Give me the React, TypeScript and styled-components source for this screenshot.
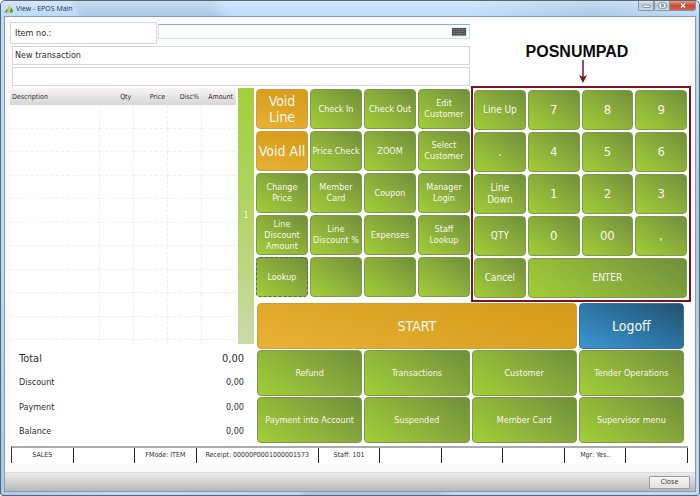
import React from "react";
import styled, { createGlobalStyle, css } from "styled-components";

const GlobalStyle = createGlobalStyle`
  *, *::before, *::after { box-sizing: border-box; }
  html, body { margin: 0; padding: 0; background: #ffffff; }
  body, button, input, table {
    font-family: "DejaVu Sans Condensed", "DejaVu Sans", "Noto Sans", sans-serif;
    color: #2e2e2e;
  }
  body { font-size: 9px; }
`;

const skins = {
  green: css`
    background: linear-gradient(35deg, #a3d037 0%, #89ab3b 55%, #6e8e3b 100%);
    border-color: #7c9a48;
  `,
  orange: css`
    background: linear-gradient(15deg, #e8b236 0%, #dda526 50%, #d49a18 100%);
    border-color: #c99d45;
  `,
  blue: css`
    background: linear-gradient(25deg, #3c98d4 0%, #2d74a3 50%, #23506f 100%);
    border-color: #3d6f90;
  `,
};
type Skin = keyof typeof skins;

const textSizes = {
  small: css`font-size: 9px; line-height: 11px;`,
  medium: css`font-size: 10px; line-height: 12px;`,
  digit: css`font-size: 13px; line-height: 16px;`,
  large: css`font-size: 14px; line-height: 16px;`,
};
type TextSize = keyof typeof textSizes;

const WindowFrame = styled.div`
  min-height: 100vh;
  display: flex;
  flex-direction: column;
  padding: 0 3px 3px;
  border: 1px solid #5c646e;
  border-radius: 5px 5px 3px 3px;
  background:
    linear-gradient(180deg, rgba(255, 255, 255, 0.35) 0, rgba(255, 255, 255, 0) 16px),
    linear-gradient(65deg, #a9c9ec 0%, #bbdcfd 12%, #b9dafb 32%, #a8c8e8 33%, #a8c8e8 47%, #badbfc 49%, #badbfc 75%, #a9c8e8 88%, #bcdcfc 100%);
`;

const TitleBar = styled.header`
  height: 15px;
  display: flex;
  align-items: center;
  gap: 3px;
`;

const Title = styled.h1`
  flex: 1;
  margin: 0;
  font: 7px/10px "Open Sans", "Noto Sans", sans-serif;
  color: #1d2b3a;
`;

const CaptionButtons = styled.div`
  display: flex;
  align-self: flex-start;
`;

const CaptionButton = styled.button<{ $close?: boolean }>`
  width: ${(p) => (p.$close ? 26 : 16)}px;
  height: 10px;
  padding: 0;
  display: flex;
  align-items: center;
  justify-content: center;
  border: 1px solid #8793a3;
  border-top: 0;
  border-left-width: ${(p) => (p.$close ? 0 : 1)}px;
  border-radius: 0 0 ${(p) => (p.$close ? "3px 0" : "0 2px")};
  background: ${(p) =>
    p.$close
      ? "linear-gradient(#e3a090, #cd4a30 50%, #d4634a)"
      : "linear-gradient(#dfe7f1, #b7c4d4 50%, #cddbea)"};
`;

const Client = styled.main`
  flex: 1;
  display: flex;
  flex-direction: column;
  border: 1px solid #8c9bab;
  background: #fafafa;
`;

const Panel = styled.div`
  flex: 1;
  margin: 5px 5px 8px;
  background: #ffffff;
`;

const Workspace = styled.div`
  display: grid;
  grid-template-columns: minmax(0, 246fr) minmax(0, 215fr) minmax(0, 220fr);
  grid-template-rows: 64px auto auto;
  margin-right: -1px;
`;

const EntryArea = styled.div`
  grid-column: 1 / 3;
  display: flex;
  flex-direction: column;
  gap: 2px;
  padding-right: 1px;
`;

const EntryRow = styled.form`
  display: flex;
  align-items: flex-start;
  gap: 1px;
  margin: 0;
`;

const EntryLabel = styled.label`
  width: 32%;
  height: 22px;
  padding-left: 4px;
  border: 1px solid #d9d9d9;
  font-size: 9px;
  line-height: 20px;
`;

const EntryField = styled.div`
  flex: 1;
  height: 15px;
  margin-top: 2px;
  display: flex;
  align-items: center;
  padding-right: 2px;
  border: 1px solid #c5dff3;
  border-top-color: #86b1d8;
`;

const EntryInput = styled.input`
  flex: 1;
  min-width: 0;
  height: 12px;
  padding: 0 4px;
  border: 0;
  outline: 0;
  background: transparent;
  font-size: 9px;
`;

const KeyboardButton = styled.button`
  width: 16px;
  height: 10px;
  padding: 0;
  border: 0;
  background: none;
  display: flex;
`;

const MessageLine = styled.p`
  height: 19px;
  margin: 0 0 0 2px;
  padding-left: 2px;
  border: 1px solid #d6d6d6;
  font-size: 9px;
  line-height: 17px;
`;

const Annotation = styled.div`
  display: flex;
  flex-direction: column;
  align-items: center;
  justify-content: flex-end;
  padding-bottom: 3px;
`;

const AnnotationText = styled.strong`
  padding-right: 8px;
  font: bold 16px/18px "Liberation Sans", Arial, sans-serif;
  color: #0c0c0c;
`;

const AnnotationArrow = styled.svg`
  margin-left: 4px;
  margin-top: -1px;
`;

const Ledger = styled.section`
  grid-column: 1;
  grid-row: 2 / 4;
  padding: 2px 2px 0 0;
  display: flex;
  flex-direction: column;
`;

const Journal = styled.div`
  display: flex;
  gap: 2px;
`;

const JournalTable = styled.table`
  flex: 1;
  table-layout: fixed;
  border-collapse: separate;
  border-spacing: 0;
  font-size: 7px;
`;

const HeadCell = styled.th<{ $share: number; $left?: boolean }>`
  width: ${(p) => p.$share}%;
  height: 17px;
  padding: 0 3px 0 2px;
  background: linear-gradient(#f8f6f6, #e4e3e3 60%, #d6d6d6);
  font-weight: normal;
  text-align: ${(p) => (p.$left ? "left" : "right")};
  white-space: nowrap;
`;

const JournalRow = styled.tr`
  height: 23px;
  &:nth-child(odd) { height: 24px; }
  &:last-child { height: 4px; }
  &:last-child td { border-bottom: 0; }
`;

const JournalCell = styled.td`
  padding: 0;
  border-bottom: 1px dashed #eeeeee;
  border-right: 1px dashed #eeeeee;
  &:last-child { border-right: 0; }
`;

const PageTab = styled.button`
  width: 16px;
  padding: 0;
  border: 0;
  background: linear-gradient(#a2cf3c, #b2d468 50%, #c9dba9);
  color: #f6f9ee;
  font: 8px/10px "DejaVu Sans", sans-serif;
`;

const Totals = styled.dl`
  margin: 2px 0 0;
  height: 97px;
  padding: 0 10px 0 9px;
  display: flex;
  flex-direction: column;
`;

const TotalRow = styled.div<{ $strong?: boolean }>`
  flex: 1;
  display: flex;
  align-items: center;
  justify-content: space-between;
  font-size: ${(p) => (p.$strong ? 11 : 9)}px;
  dd { margin: 0; }
`;

const KeyGrid = styled.section`
  display: grid;
  grid-template-columns: repeat(4, minmax(0, 1fr));
  grid-auto-rows: 40px;
  align-content: start;
  gap: 2px;
  padding: 3px 1px 0 0;
`;

const NumPad = styled(KeyGrid)`
  padding: 2px 2px 2px 1px;
  border: 2px solid #7b1420;
`;

const ActionGrid = styled.section`
  grid-column: 2 / 4;
  display: grid;
  grid-template-columns: repeat(4, minmax(0, 1fr));
  grid-auto-rows: 46px;
  gap: 1px 2px;
  margin: 1px 7px 3px 1px;
`;

const Key = styled.button<{ $skin: Skin; $size: TextSize; $span?: number; $focused?: boolean }>`
  grid-column: span ${(p) => p.$span ?? 1};
  min-width: 0;
  padding: 0;
  border: 1px solid;
  border-radius: 4px;
  color: #f7f9ee;
  text-align: center;
  white-space: pre;
  ${(p) => skins[p.$skin]}
  ${(p) => textSizes[p.$size]}
  background-origin: border-box;
  ${(p) => p.$focused && css`border: 1px dashed #5a6452;`}
`;

const StatusBar = styled.footer`
  display: flex;
  margin: 0 2px 0 1px;
  border-top: 2px solid #ababab;
  border-left: 1px solid #333333;
`;

const StatusCell = styled.div<{ $share?: number }>`
  flex: ${(p) => p.$share ?? 1} 1 0;
  min-width: 0;
  height: 15px;
  border-right: 1px solid #222222;
  font-size: 7px;
  line-height: 15px;
  text-align: center;
  white-space: nowrap;
`;

const CommandBar = styled.div`
  height: 19px;
  display: flex;
  align-items: center;
  justify-content: flex-end;
  padding-right: 5px;
  border-top: 1px solid #dcdcdc;
  background: linear-gradient(#ebebeb, #d3d3d3 50%, #b6b6b6);
`;

const CloseButton = styled.button`
  width: 41px;
  height: 13px;
  padding: 0;
  border: 1px solid #9c9c9c;
  border-radius: 1px;
  background: linear-gradient(#f6f6f6, #e2e2e2);
  font: 7px/10px "Open Sans", "Noto Sans", sans-serif;
`;

type KeyDef = { text: string; skin?: Skin; size?: TextSize; span?: number; focused?: boolean };

const functionKeys: KeyDef[] = [
  { text: "Void\nLine", skin: "orange", size: "large" },
  { text: "Check In" },
  { text: "Check Out" },
  { text: "Edit\nCustomer" },
  { text: "Void All", skin: "orange", size: "large" },
  { text: "Price Check" },
  { text: "ZOOM" },
  { text: "Select\nCustomer" },
  { text: "Change\nPrice" },
  { text: "Member\nCard" },
  { text: "Coupon" },
  { text: "Manager\nLogin" },
  { text: "Line\nDiscount\nAmount" },
  { text: "Line\nDiscount %" },
  { text: "Expenses" },
  { text: "Staff\nLookup" },
  { text: "Lookup", focused: true },
  { text: "" },
  { text: "" },
  { text: "" },
];

const numpadKeys: KeyDef[] = [
  { text: "Line Up", size: "medium" },
  { text: "7", size: "digit" },
  { text: "8", size: "digit" },
  { text: "9", size: "digit" },
  { text: ".", size: "digit" },
  { text: "4", size: "digit" },
  { text: "5", size: "digit" },
  { text: "6", size: "digit" },
  { text: "Line\nDown", size: "medium" },
  { text: "1", size: "digit" },
  { text: "2", size: "digit" },
  { text: "3", size: "digit" },
  { text: "QTY", size: "medium" },
  { text: "0", size: "digit" },
  { text: "00", size: "digit" },
  { text: ",", size: "digit" },
  { text: "Cancel", size: "medium" },
  { text: "ENTER", size: "medium", span: 3 },
];

const actionKeys: KeyDef[] = [
  { text: "START", skin: "orange", size: "large", span: 3 },
  { text: "Logoff", skin: "blue", size: "large" },
  { text: "Refund" },
  { text: "Transactions" },
  { text: "Customer" },
  { text: "Tender Operations" },
  { text: "Payment into Account" },
  { text: "Suspended" },
  { text: "Member Card" },
  { text: "Supervisor menu" },
];

const columns = [
  { name: "Description", share: 40, left: true },
  { name: "Qty", share: 15 },
  { name: "Price", share: 15 },
  { name: "Disc%", share: 15 },
  { name: "Amount", share: 15 },
];

const totals = ["Total", "Discount", "Payment", "Balance"];

const statusCells: { text: string; share?: number }[] = [
  { text: "SALES" },
  { text: "" },
  { text: "FMode: ITEM" },
  { text: "Receipt: 00000P0001000001573", share: 2 },
  { text: "Staff: 101" },
  { text: "" },
  { text: "" },
  { text: "" },
  { text: "Mgr: Yes.." },
  { text: "" },
];

function Keys({ items }: { items: KeyDef[] }) {
  return (
    <>
      {items.map((k, i) => (
        <Key
          key={i}
          type="button"
          $skin={k.skin ?? "green"}
          $size={k.size ?? "small"}
          $span={k.span}
          $focused={k.focused}
          aria-label={k.text ? undefined : "Unassigned"}
        >
          {k.text}
        </Key>
      ))}
    </>
  );
}

function AppIcon() {
  return (
    <svg width="9" height="9" viewBox="0 0 18 18" aria-hidden="true">
      <path d="M0 17 Q4 15 6 9 L8 11 V17 Z" fill="#2f7fc4" />
      <path d="M5 17 Q9 11 8 1 Q13 5 12 17 Z" fill="#f5c518" />
      <path d="M11 17 Q14 13 13 6 Q18 9 18 17 Z" fill="#4f9f45" />
    </svg>
  );
}

function KeyboardIcon() {
  return (
    <svg width="16" height="10" viewBox="0 0 32 20" aria-hidden="true">
      <rect x="0.5" y="0.5" width="31" height="19" fill="#e3e3e3" />
      <rect x="2" y="2" width="28" height="15" fill="#505050" />
      <path d="M4 5h24M4 9h24" stroke="#7c7c7c" strokeWidth="2" strokeDasharray="2 1" />
      <path d="M4 13h3M9 13h13M25 13h3" stroke="#7c7c7c" strokeWidth="2" />
    </svg>
  );
}

export default function App() {
  return (
    <>
      <GlobalStyle />
      <WindowFrame>
        <TitleBar>
          <AppIcon />
          <Title>View - EPOS Main</Title>
          <CaptionButtons>
            <CaptionButton type="button" aria-label="Minimize">
              <svg width="9" height="5" viewBox="0 0 9 5">
                <rect x="1" y="2" width="7" height="2.5" rx="0.5" fill="#fff" stroke="#68727e" strokeWidth="0.7" />
              </svg>
            </CaptionButton>
            <CaptionButton type="button" aria-label="Maximize">
              <svg width="9" height="7" viewBox="0 0 9 7">
                <rect x="1" y="0.8" width="7" height="5.4" rx="0.8" fill="#fff" stroke="#68727e" strokeWidth="0.8" />
                <rect x="3.4" y="2.6" width="2.2" height="1.8" fill="#9aa5b2" stroke="#68727e" strokeWidth="0.6" />
              </svg>
            </CaptionButton>
            <CaptionButton type="button" aria-label="Close window" $close>
              <svg width="8" height="7" viewBox="0 0 8 7">
                <path d="M2 1.5 L6 5.5 M6 1.5 L2 5.5" stroke="#6b4a4a" strokeWidth="2.6" />
                <path d="M2 1.5 L6 5.5 M6 1.5 L2 5.5" stroke="#ffffff" strokeWidth="1.5" />
              </svg>
            </CaptionButton>
          </CaptionButtons>
        </TitleBar>

        <Client>
          <Panel>
            <Workspace>
              <EntryArea>
                <EntryRow onSubmit={(e) => e.preventDefault()}>
                  <EntryLabel htmlFor="item-no">Item no.:</EntryLabel>
                  <EntryField>
                    <EntryInput id="item-no" type="text" />
                    <KeyboardButton type="button" aria-label="On-screen keyboard">
                      <KeyboardIcon />
                    </KeyboardButton>
                  </EntryField>
                </EntryRow>
                <MessageLine>New transaction</MessageLine>
                <MessageLine />
              </EntryArea>

              <Annotation>
                <AnnotationText>POSNUMPAD</AnnotationText>
                <AnnotationArrow width="10" height="23" viewBox="0 0 10 23" aria-hidden="true">
                  <path d="M5 0V18" stroke="#7b1420" strokeWidth="1.5" />
                  <path d="M1 15 L5 23 L9 15 L5 17 Z" fill="#7b1420" />
                </AnnotationArrow>
              </Annotation>

              <Ledger>
                <Journal>
                  <JournalTable>
                    <thead>
                      <tr>
                        {columns.map((c) => (
                          <HeadCell key={c.name} scope="col" $share={c.share} $left={c.left}>
                            {c.name}
                          </HeadCell>
                        ))}
                      </tr>
                    </thead>
                    <tbody>
                      {Array.from({ length: 11 }, (_, r) => (
                        <JournalRow key={r}>
                          {columns.map((c) => (
                            <JournalCell key={c.name} />
                          ))}
                        </JournalRow>
                      ))}
                    </tbody>
                  </JournalTable>
                  <PageTab type="button">1</PageTab>
                </Journal>
                <Totals>
                  {totals.map((t, i) => (
                    <TotalRow key={t} $strong={i === 0}>
                      <dt>{t}</dt>
                      <dd>0,00</dd>
                    </TotalRow>
                  ))}
                </Totals>
              </Ledger>

              <KeyGrid aria-label="Functions">
                <Keys items={functionKeys} />
              </KeyGrid>
              <NumPad aria-label="Number pad">
                <Keys items={numpadKeys} />
              </NumPad>
              <ActionGrid aria-label="Actions">
                <Keys items={actionKeys} />
              </ActionGrid>
            </Workspace>

            <StatusBar>
              {statusCells.map((s, i) => (
                <StatusCell key={i} $share={s.share}>
                  {s.text}
                </StatusCell>
              ))}
            </StatusBar>
          </Panel>
          <CommandBar>
            <CloseButton type="button">Close</CloseButton>
          </CommandBar>
        </Client>
      </WindowFrame>
    </>
  );
}
